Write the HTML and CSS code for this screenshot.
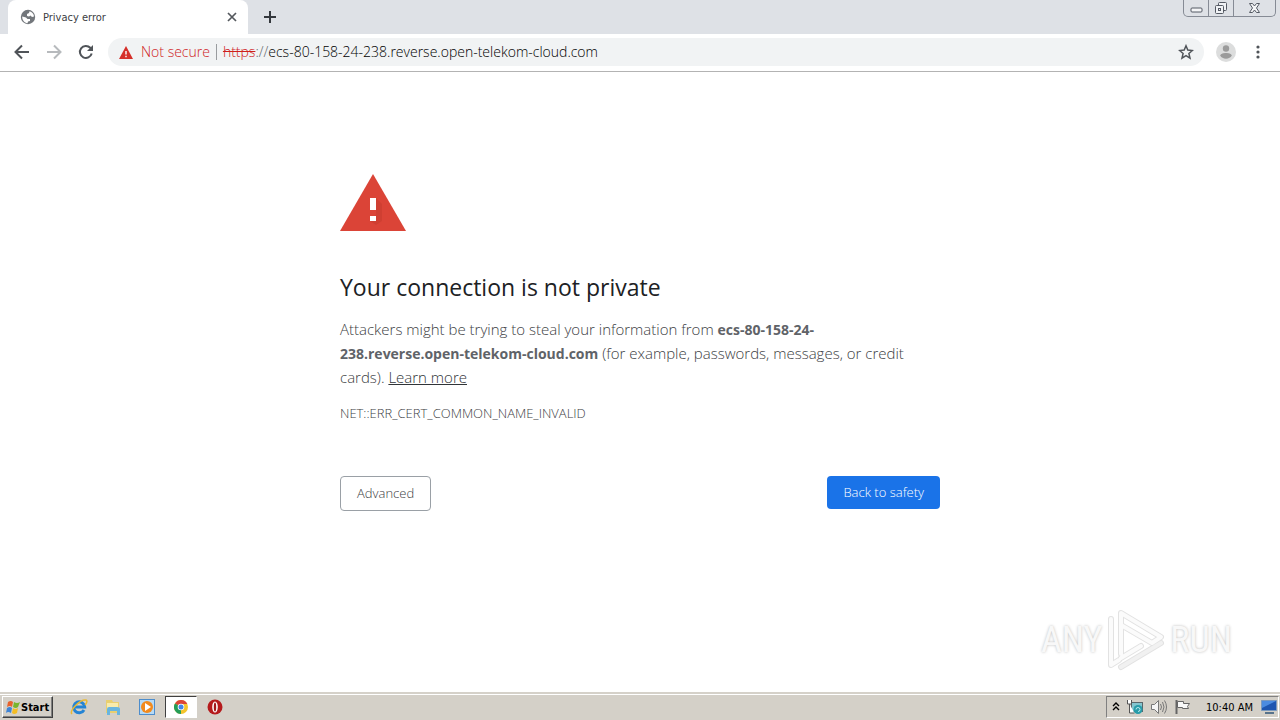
FILE: index.html
```html
<!DOCTYPE html>
<html lang="en">
<head>
<meta charset="utf-8">
<title>Privacy error</title>
<link rel="stylesheet" href="styles.css">
</head>
<body>
<header class="browser">
  <div class="tabstrip">
    <div class="tab">
      <svg class="globe" viewBox="0 0 16 16"><circle cx="8" cy="8" r="7.2" fill="#73777c"/><path d="M2.200 7.500 6 8.500l1.500 1.500H10v2l-2 .5-.5 1.700C4.500 14 2 11 2.200 7.500ZM9.500 2.200 9 4 7 5v2l2 .5 1.500-1L12 8l2-.5C14 5 12 2.700 9.500 2.200Z" fill="#fff"/></svg>
      <span class="tab-title">Privacy error</span>
      <button class="icon-btn tab-close" aria-label="Close tab"><svg width="10" height="10" viewBox="0 0 10 10"><path d="m1 1 8 8M9 1 1 9" stroke="#54585d" stroke-width="1.700"/></svg></button>
    </div>
    <button class="icon-btn new-tab" aria-label="New tab"><svg width="12" height="12" viewBox="0 0 12 12"><path d="M6 0v12M0 6h12" stroke="#34383d" stroke-width="2"/></svg></button>
    <div class="window-controls">
      <button class="win min" aria-label="Minimize"><svg width="13" height="6" viewBox="0 0 13 6"><rect x="1" y="1" width="11" height="4" rx="1" fill="#f4f5f7" stroke="#555a64"/></svg></button>
      <button class="win" aria-label="Restore"><svg width="14" height="14" viewBox="0 0 14 14" fill="#f0f2f5" stroke="#555a64"><rect x="4.500" y="1.500" width="8" height="8" rx="1"/><rect x="1.500" y="4.500" width="8" height="8" rx="1"/><rect x="4.500" y="7.500" width="2" height="2"/></svg></button>
      <button class="win close" aria-label="Close"><svg width="13" height="12" viewBox="0 0 13 12"><path d="M1.500 1.500h3l2 2.500 2-2.500h3L8.500 6l3 4.500h-3l-2-2.500-2 2.500h-3L4.500 6Z" fill="#f4f5f7" stroke="#555a64"/></svg></button>
    </div>
  </div>
  <div class="toolbar">
    <button class="icon-btn" aria-label="Back"><svg width="16" height="16" viewBox="0 0 16 16" fill="none" stroke="#505459" stroke-width="2"><path d="M15 8H2M8 1.500 1.500 8 8 14.500"/></svg></button>
    <button class="icon-btn" aria-label="Forward"><svg width="16" height="16" viewBox="0 0 16 16" fill="none" stroke="#b7babd" stroke-width="2"><path d="M1 8h13M8 1.500 14.500 8 8 14.500"/></svg></button>
    <button class="icon-btn" aria-label="Reload"><svg width="16" height="16" viewBox="0 0 16 16"><path d="M13.700 9.500A6 6 0 1 1 12.300 3.800L14 5.500" fill="none" stroke="#505459" stroke-width="2"/><path d="M15 1v6H9Z" fill="#505459"/></svg></button>
    <div class="omnibox">
      <svg class="warn" viewBox="0 0 14 13"><path d="M7 0 14 13H0Z" fill="#d5302a"/><path d="M7 5v3.500M7 9.700v1.500" stroke="#fff" stroke-width="1.400"/></svg>
      <span class="not-secure">Not secure</span>
      <span class="divider"></span>
      <span class="url"><s>https</s><span class="slashes">://</span>ecs-80-158-24-238.reverse.open-telekom-cloud.com</span>
      <button class="icon-btn star" aria-label="Bookmark"><svg width="16" height="16" viewBox="0 0 16 16"><path d="m8 1.800 1.800 4.300 4.600.4-3.500 3 1.100 4.600L8 11.700l-4 2.400 1.100-4.600-3.500-3 4.600-.4Z" fill="none" stroke="#505459" stroke-width="1.500"/></svg></button>
    </div>
    <button class="icon-btn avatar" aria-label="Profile"><svg width="20" height="20" viewBox="0 0 20 20"><circle cx="10" cy="10" r="10" fill="#dcdddd"/><circle cx="10" cy="6.500" r="3.200" fill="#9b9b9b"/><path d="M4.300 13.500c0-3.500 11.400-3.500 11.400 0-1.500 4.200-9.900 4.200-11.400 0Z" fill="#9b9b9b"/></svg></button>
    <button class="icon-btn" aria-label="Menu"><svg width="16" height="16" viewBox="0 0 16 16" fill="#505459"><circle cx="8" cy="3" r="1.600"/><circle cx="8" cy="8" r="1.600"/><circle cx="8" cy="13" r="1.600"/></svg></button>
  </div>
</header>

<main class="page">
  <div class="interstitial">
    <svg class="alert" viewBox="0 0 66 57"><path d="M33 0 66 57H0Z" fill="#db4437"/><path d="m36 24 6 6v17l-6 4-6-4 6-6Z" fill="#b9362c" opacity=".35"/><path d="M30 24h6v12h-6ZM30 42h6v5h-6Z" fill="#fff"/></svg>
    <h1>Your connection is not private</h1>
    <p class="message">Attackers might be trying to steal your information from <strong>ecs-80-158-24-238.reverse.open-telekom-cloud.com</strong> (for example, passwords, messages, or credit cards). <a href="#">Learn more</a></p>
    <p class="code">NET::ERR_CERT_COMMON_NAME_INVALID</p>
    <div class="actions">
      <button class="btn secondary">Advanced</button>
      <button class="btn primary">Back to safety</button>
    </div>
  </div>
  <div class="watermark">
    <span>ANY</span>
    <svg width="58" height="64" viewBox="0 0 58 64" fill="none" stroke-linejoin="round" stroke-linecap="round"><g stroke="#e2e2e2" stroke-width="6"><path d="M14 46V5l40 24-9 6-31-18M4 11v46l8-5M14 50l20-12M14 59l40-24"/></g><g stroke="#fbfbfb" stroke-width="4"><path d="M14 46V5l40 24-9 6-31-18M4 11v46l8-5M14 50l20-12"/></g><path d="m14 59 40-24" stroke="#f1f1f1" stroke-width="4"/></svg>
    <span>RUN</span>
  </div>
</main>

<footer class="taskbar">
  <button class="start"><svg width="16" height="15" viewBox="0 0 16 15"><path d="M3 2q3-2 5 0L7 7Q5 5 2 7Z" fill="#e8622c"/><path d="M9 2q3 2 6 0l-2 5q-2 2-5 0Z" fill="#79b52c"/><path d="M2 8q3-2 5 0l-1 5q-3-2-5 0Z" fill="#3e84d6"/><path d="M8 8q2 2 5 0l-1 5q-3 2-5 0Z" fill="#f4bd24"/></svg>Start</button>
  <button class="task" aria-label="Internet Explorer"><svg width="18" height="18" viewBox="0 0 18 18" fill="none"><path d="M14 12a5.500 5.500 0 1 1 .7-3H5" stroke="#2484d4" stroke-width="3"/><path d="M2 16C-1 13 10 1 16 2c2 1 0 4-1 5" stroke="#eab932" stroke-width="1.500"/></svg></button>
  <button class="task" aria-label="Explorer"><svg width="18" height="18" viewBox="0 0 18 18"><path d="M2 4V2h6l1 2h6v11H2Z" fill="#e9cf70"/><path d="M3 5h11v7H3Z" fill="#f8ebac"/><path d="M3 17v-6q0-2 2-2h8q3 0 3 2v6h-3v-4H6v4Z" fill="#69b5df"/></svg></button>
  <button class="task" aria-label="Media Player"><svg width="16" height="16" viewBox="0 0 16 16"><rect x=".5" y=".5" width="15" height="15" fill="#b6daf5" stroke="#4d8dcc"/><circle cx="8" cy="8" r="6" fill="#f28a1c"/><path d="m6 4 6 4-6 4Z" fill="#fff"/></svg></button>
  <button class="task active" aria-label="Chrome"><svg width="14" height="14" viewBox="0 0 14 14"><circle cx="7" cy="7" r="7" fill="#f4c42c"/><path d="M7 7 1 3.400A7 7 0 0 1 13.300 4H7Z" fill="#dc4437"/><path d="M7 7v7A7 7 0 0 1 1 3.400Z" fill="#249d58"/><circle cx="7" cy="7" r="3.300" fill="#fff"/><circle cx="7" cy="7" r="2.500" fill="#4285e8"/></svg></button>
  <button class="task" aria-label="Opera"><svg width="16" height="16" viewBox="0 0 16 16"><circle cx="8" cy="8" r="7.500" fill="#b51a1c"/><ellipse cx="8" cy="8" rx="2.800" ry="5.500" fill="#fff"/><ellipse cx="8" cy="8" rx="1.200" ry="4.500" fill="#a31719"/></svg></button>
  <div class="tray">
    <svg width="8" height="10" viewBox="0 0 8 10" fill="none" stroke="#000" stroke-width="1.400"><path d="m1 4 3-3 3 3M1 8l3-3 3 3"/></svg>
    <svg width="18" height="16" viewBox="0 0 18 16"><rect x="5.500" y="3.500" width="11" height="9" fill="#83c5cf" stroke="#58666b"/><path d="M1.500 1v4h4V1M3.500 5v9h5" fill="#fff" stroke="#555"/><circle cx="12" cy="10.500" r="4.500" fill="#289ca9"/><path d="M10 10.500a2 2 0 1 1 2 2" fill="none" stroke="#bceaf0"/></svg>
    <svg width="18" height="16" viewBox="0 0 18 16" fill="none" stroke="#777"><path d="M1.500 5.500h3l4-4v13l-4-4h-3Z" fill="#f5f5f5"/><path d="M10.500 5q2 3 0 6M12.500 3q3 5 0 10M14.500 1.500q4 6.500 0 13"/></svg>
    <svg width="18" height="16" viewBox="0 0 18 16" stroke="#666"><path d="M2.500 1v14" stroke-width="2"/><path d="M3.500 2.500h6v2h6l-2 3 1 2h-6v-1h-5Z" fill="#f8f8f8"/></svg>
    <time>10:40 AM</time>
    <svg width="16" height="14" viewBox="0 0 16 14"><path d="M.5.500h15v10H.5Z" fill="#1d55b0" stroke="#7b99bd"/><path d="M1 1h14L1 8Z" fill="#4b8be0"/><path d="M4 13h9" stroke="#58738c" stroke-width="2"/></svg>
  </div>
</footer>
</body>
</html>
```
FILE: styles.css
```css
* { box-sizing: border-box; }
body {
  margin: 0;
  min-height: 100vh;
  display: flex;
  flex-direction: column;
  background: #fff;
  color: #3c4043;
  font-family: "Open Sans", "Noto Sans", sans-serif;
  font-weight: 300;
}
button { font: inherit; padding: 0; }
.icon-btn {
  display: grid;
  place-items: center;
  border: 0;
  background: none;
}
.browser { border-bottom: 1px solid #b3b3b3; }
.tabstrip {
  display: flex;
  align-items: stretch;
  height: 34px;
  padding-left: 8px;
  background: #dee1e6;
}
.tab {
  display: flex;
  align-items: center;
  width: 240px;
  padding: 0 10px 0 12px;
  gap: 7px;
  border-radius: 8px 8px 0 0;
  background: #fff;
}
.globe { width: 16px; height: 16px; }
.tab-title {
  flex: 1;
  color: #3c4043;
  font: 11px "DejaVu Sans Condensed", "DejaVu Sans", sans-serif;
}
.tab-close { width: 12px; height: 16px; }
.new-tab { width: 44px; }
.window-controls {
  display: flex;
  height: 17px;
  margin-left: auto;
  margin-right: 4px;
  border: 1px solid #868b95;
  border-top: 0;
  border-radius: 0 0 5px 5px;
}
.win {
  display: grid;
  place-items: center;
  width: 25px;
  border: 0;
  border-right: 1px solid #868b95;
  background: none;
}
.min { align-items: end; padding-bottom: 3px; }
.win.close { width: 41px; border-right: 0; }
.toolbar {
  display: flex;
  align-items: center;
  height: 37px;
  padding: 0 14px 1px 14px;
  gap: 16px;
}
.omnibox {
  flex: 1;
  display: flex;
  align-items: center;
  height: 28px;
  margin-left: -2px;
  margin-right: -4px;
  padding: 0 10px 0 11px;
  border-radius: 14px;
  background: #f1f3f4;
  font-size: 14px;
}
.avatar { margin-right: -2px; }
.warn { width: 14px; height: 13px; margin-right: 8px; }
.not-secure, .url s { color: #cf211b; }
.divider { width: 1px; height: 16px; margin: 0 6px; background: #999c9f; }
.not-secure, .url { padding-bottom: 2px; }
.url { flex: 1; color: #000; }
.slashes { color: #62666b; }
.page {
  position: relative;
  flex: 1;
  padding: 102px 24px 0;
}
.interstitial { max-width: 600px; margin: 0 auto; }
.alert { display: block; width: 66px; height: 57px; }
h1 {
  margin: 40px 0 14px;
  color: #202124;
  font-size: 23px;
  font-weight: 400;
  line-height: 32px;
}
.message { margin: 0; padding-right: 24px; font-size: 15px; line-height: 24px; }
.message strong { color: #5f6368; font-size: 14px; font-weight: 700; line-height: 16px; }
.message a { color: #303438; }
.code { margin: 12px 0 0; font-size: 13px; line-height: 24px; }
.actions {
  display: flex;
  align-items: flex-start;
  justify-content: space-between;
  margin-top: 51px;
}
.btn {
  padding: 0 16px;
  border-radius: 4px;
  font-size: 13px;
  line-height: 33px;
}
.secondary { border: 1px solid #9aa0a6; background: #fff; color: #3c4043; }
.primary { border: 0; background: #1a73e8; color: #fff; }
.watermark {
  position: absolute;
  right: 48px;
  bottom: 20px;
  display: flex;
  align-items: center;
  gap: 5px;
  color: #f8f8f8;
  font: 400 36px/64px "Roboto Condensed", "Open Sans Condensed", "Liberation Sans Narrow", sans-serif;
  text-shadow: 0 0 3px #bdbdbd;
}
.taskbar {
  display: flex;
  align-items: center;
  height: 28px;
  padding-left: 2px;
  border-top: 2px solid #d5d1c9;
  background: #d4d0c8;
  box-shadow: inset 0 1px #fff;
}
.start {
  display: flex;
  align-items: center;
  height: 22px;
  margin-right: 10px;
  padding: 0 3px 0 2px;
  border: 1px solid;
  border-color: #fff #404040 #404040 #fff;
  background: #d4d0c8;
  box-shadow: inset -1px -1px #808080;
  color: #000;
  font: bold 11px "DejaVu Sans Condensed", "DejaVu Sans", sans-serif;
}
.task {
  display: grid;
  place-items: center;
  width: 32px;
  height: 22px;
  margin-right: 2px;
  border: 0;
  background: none;
}
.task.active {
  border: 1px solid;
  border-color: #404040 #fff #fff #404040;
  background: #fff;
}
.tray {
  display: flex;
  align-items: center;
  gap: 6px;
  height: 22px;
  margin-left: auto;
  margin-right: 1px;
  padding: 0 1px 0 5px;
  border: 1px solid;
  border-color: #808080 #fff #fff #808080;
  color: #000;
  font: 11px "DejaVu Sans Condensed", "DejaVu Sans", sans-serif;
}
.tray time { margin: 0 2px 0 8px; white-space: nowrap; }
```
